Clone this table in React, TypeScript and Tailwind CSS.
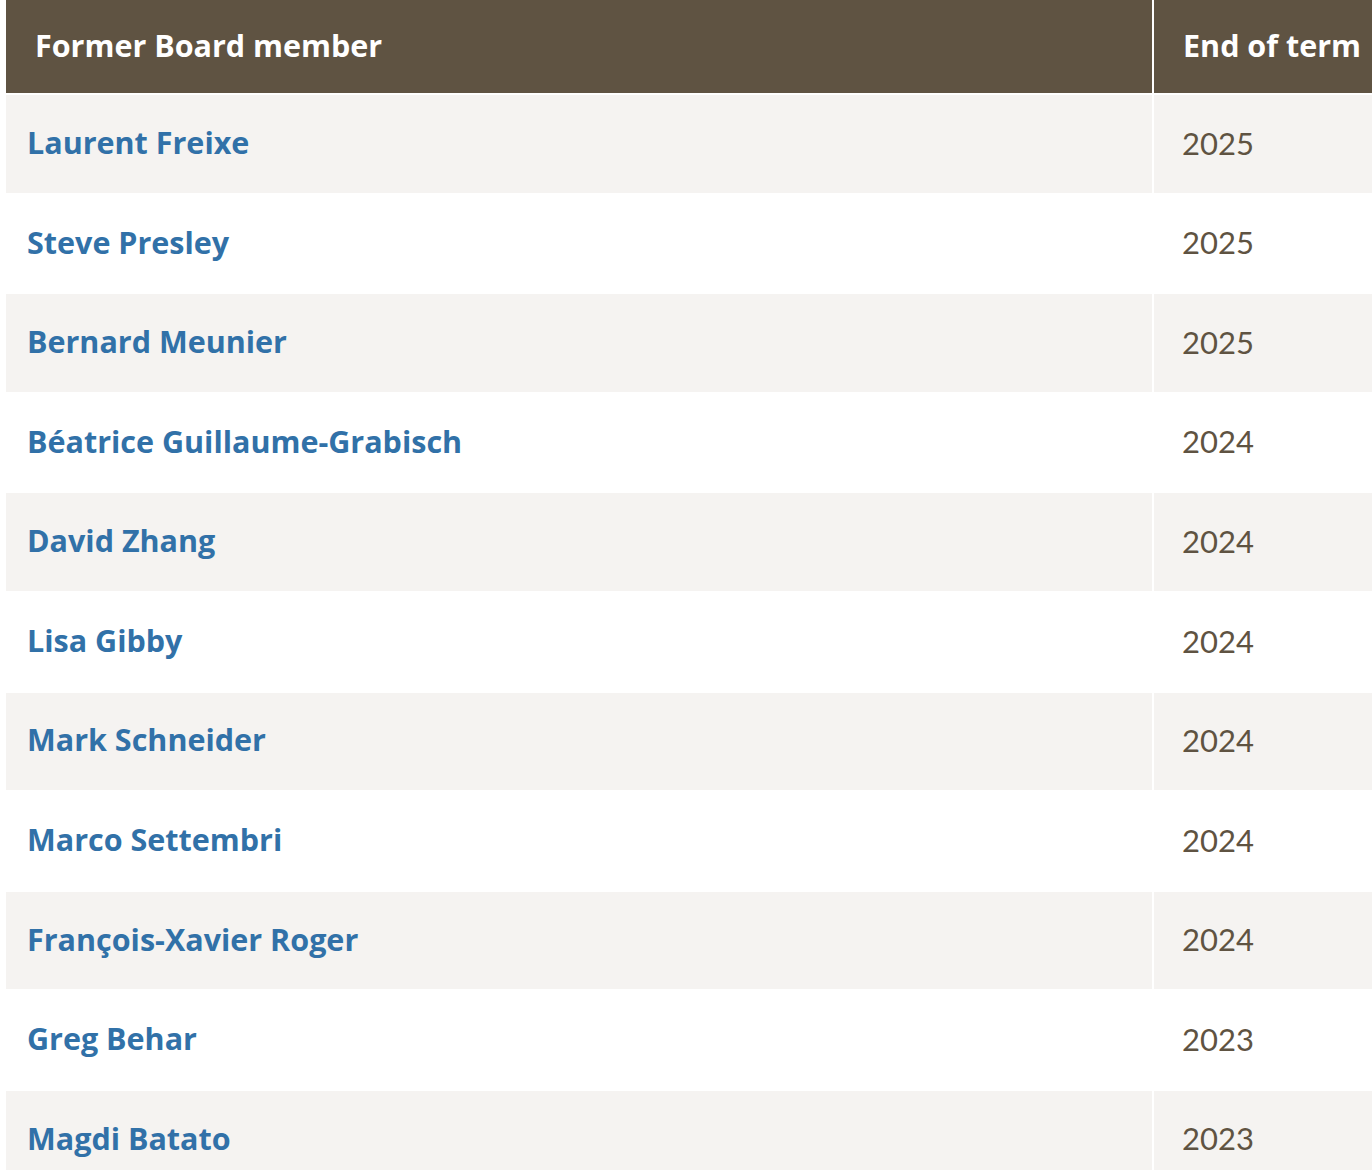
const formerMembers = [
  { name: "Laurent Freixe", year: "2025" },
  { name: "Steve Presley", year: "2025" },
  { name: "Bernard Meunier", year: "2025" },
  { name: "Béatrice Guillaume-Grabisch", year: "2024" },
  { name: "David Zhang", year: "2024" },
  { name: "Lisa Gibby", year: "2024" },
  { name: "Mark Schneider", year: "2024" },
  { name: "Marco Settembri", year: "2024" },
  { name: "François-Xavier Roger", year: "2024" },
  { name: "Greg Behar", year: "2023" },
  { name: "Magdi Batato", year: "2023" },
];

const App = () => {
  return (
    <div className="w-[1372px] h-[1170px] overflow-hidden bg-white pl-[6px] font-['Open_Sans','Liberation_Sans',sans-serif]">
      <div className="flex flex-col gap-[2px] w-[1420px]">
        {/* Header */}
        <div className="grid grid-cols-[1146px_1fr] gap-[2px] h-[93px]">
          <div className="bg-[#5f5342] flex items-center pl-[29px] pb-[2px] text-[30.5px] font-bold text-white">
            Former Board member
          </div>
          <div className="bg-[#5f5342] flex items-center pl-[29px] pb-[2px] text-[30.5px] font-bold text-white">
            End of term
          </div>
        </div>

        {/* Rows */}
        {formerMembers.map((member, index) => {
          const bg = index % 2 === 0 ? "bg-[#f5f3f1]" : "bg-white";
          return (
            <div key={member.name} className="grid grid-cols-[1146px_1fr] gap-[2px] h-[97.6px]">
              <div className={`flex items-center pl-[21px] pb-[2px] ${bg}`}>
                <a href="#" className="text-[30.5px] font-bold text-[#3171a8]">
                  {member.name}
                </a>
              </div>
              <div className={`flex items-center pl-[28px] pb-[2px] text-[31px] text-[#5f5342] font-['Lato','Liberation_Sans',sans-serif] ${bg}`}>
                {member.year}
              </div>
            </div>
          );
        })}
      </div>
    </div>
  );
};

export default App;
